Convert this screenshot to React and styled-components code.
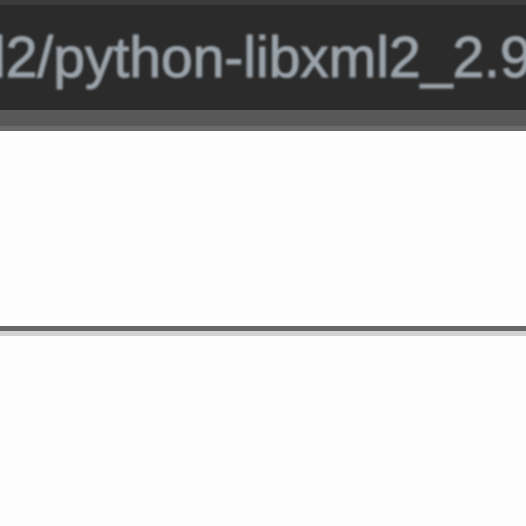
import React from "react";
import styled, { createGlobalStyle } from "styled-components";

const GlobalStyle = createGlobalStyle`
  html, body {
    margin: 0;
    padding: 0;
    background: #fdfdfd;
  }
  #root {
    min-height: 526px;
  }
`;

const Window = styled.div`
  display: flex;
  flex-direction: column;
  width: 526px;
  height: 526px;
  overflow: hidden;
  background: #fdfdfd;
`;

const PathBar = styled.header`
  display: flex;
  align-items: flex-start;
  flex-shrink: 0;
  height: 110px;
  padding-top: 24px;
  box-sizing: border-box;
  background: #2b2b2b;
  border-top: 5px solid #3a3a3a;
  overflow: hidden;
  white-space: nowrap;
`;

const PathText = styled.span`
  display: block;
  margin-left: -140px;
  font-family: "Liberation Sans", Arial, sans-serif;
  font-size: 57px;
  line-height: 57px;
  color: #9ca4ab;
  -webkit-text-stroke: 1px #9ca4ab;
  filter: blur(0.9px);
`;

const Strip = styled.div`
  flex-shrink: 0;
  height: 16px;
  background: #585858;
  border-bottom: 5px solid #6a6a6a;
  box-shadow: 0 2px 0 #cfcfcf;
`;

const Panel = styled.section`
  flex-shrink: 0;
  height: ${(p) => p.$height}px;
  background: #fdfdfd;
`;

const Divider = styled.div`
  flex-shrink: 0;
  height: 5px;
  background: #676767;
  border-bottom: 5px solid #d2d2d2;
`;

export default function App() {
  return (
    <>
      <GlobalStyle />
      <Window>
        <PathBar>
          <PathText>libxml2/python-libxml2_2.9.4</PathText>
        </PathBar>
        <Strip />
        <Panel $height={195} />
        <Divider />
        <Panel $height={190} />
      </Window>
    </>
  );
}
